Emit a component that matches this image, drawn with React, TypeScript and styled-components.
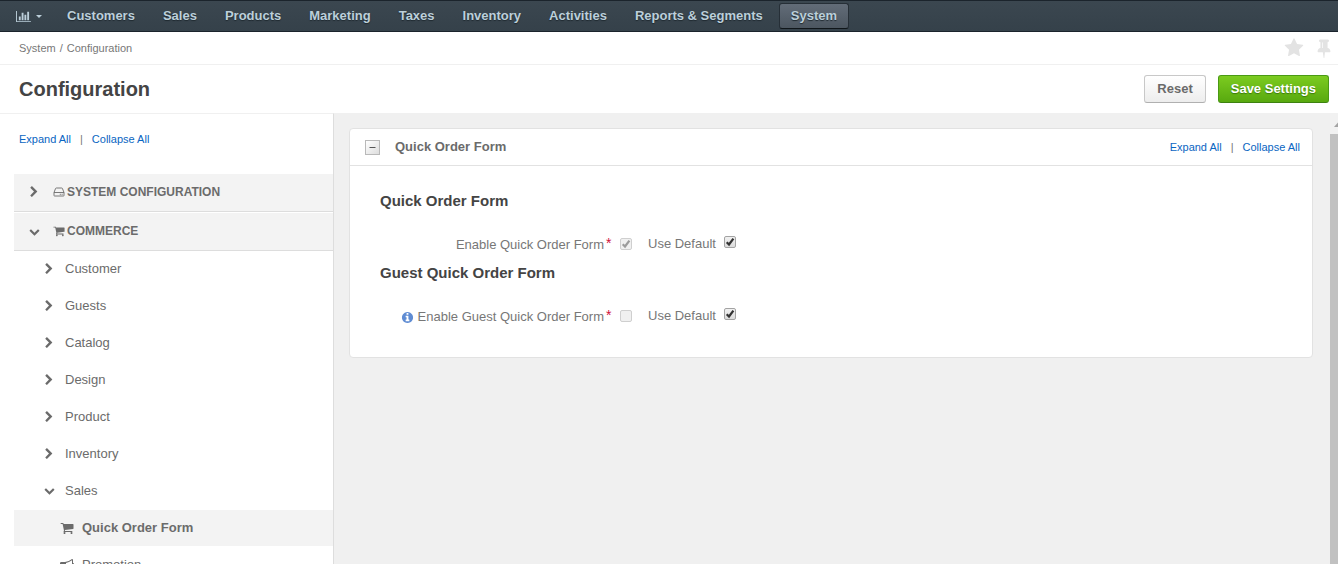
import React from "react";
import styled, { createGlobalStyle, css } from "styled-components";

const Global = createGlobalStyle`
  * { box-sizing: border-box; }
  body {
    margin: 0;
    background: #fff;
    color: #777;
    font-family: "Liberation Sans", Arial, sans-serif;
    font-size: 13px;
    line-height: 18px;
  }
  h1, h2, h3, ul, ol { margin: 0; padding: 0; }
  ul, ol { list-style: none; }
`;

/* ---------- icons ---------- */

const paths = {
  chart:
    "M640 896v512h-256v-512h256zm384-512v1024h-256v-1024h256zm1024 1152v128h-2048v-1536h128v1408h1920zm-640-896v768h-256v-768h256zm384-384v1152h-256v-1152h256z",
  right:
    "M1363 877l-742 742q-19 19-45 19t-45-19l-166-166q-19-19-19-45t19-45l531-531-531-531q-19-19-19-45t19-45l166-166q19-19 45-19t45 19l742 742q19 19 19 45t-19 45z",
  down:
    "M1683 808l-742 741q-19 19-45 19t-45-19l-742-741q-19-19-19-45.500t19-45.500l166-165q19-19 45-19t45 19l531 531 531-531q19-19 45-19t45 19l166 165q19 19 19 45.500t-19 45.500z",
  cart:
    "M704 1536q0 52-38 90t-90 38-90-38-38-90 38-90 90-38 90 38 38 90zm896 0q0 52-38 90t-90 38-90-38-38-90 38-90 90-38 90 38 38 90zm128-1088v512q0 24-16.500 42.500t-40.500 21.500l-1044 122q13 60 13 70 0 16-24 64h920q26 0 45 19t19 45-19 45-45 19h-1024q-26 0-45-19t-19-45q0-11 8-31.500t16-36 21.500-40 15.500-29.500l-177-823h-204q-26 0-45-19t-19-45 19-45 45-19h256q16 0 28.500 6.500t19.500 15.500 13 24.500 8 26 5.500 29.500 4.500 26h1201q26 0 45 19t19 45z",
  star:
    "M1728 647q0 22-26 48l-363 354 86 500q1 7 1 20 0 21-10.500 35.500t-30.500 14.500q-19 0-40-12l-449-236-449 236q-22 12-40 12-21 0-31.500-14.500t-10.500-35.500q0-6 2-20l86-500-364-354q-25-27-25-48 0-37 56-46l502-73 225-455q19-41 49-41t49 41l225 455 502 73q56 9 56 46z",
  pin:
    "M800 864v-448q0-14-9-23t-23-9-23 9-9 23v448q0 14 9 23t23 9 23-9 9-23zm672 352q0 26-19 45t-45 19h-429l-51 483q-2 12-10.500 20.500t-20.500 8.500h-1q-27 0-32-27l-76-485h-404q-26 0-45-19t-19-45q0-123 78.500-221.500t177.500-98.500v-512q-52 0-90-38t-38-90 38-90 90-38h640q52 0 90 38t38 90-38 90-90 38v512q99 0 177.500 98.500t78.500 221.500z",
  info:
    "M1152 1376v-160q0-14-9-23t-23-9h-96v-512q0-14-9-23t-23-9h-320q-14 0-23 9t-9 23v160q0 14 9 23t23 9h96v320h-96q-14 0-23 9t-9 23v160q0 14 9 23t23 9h448q14 0 23-9t9-23zm-128-896v-160q0-14-9-23t-23-9h-192q-14 0-23 9t-9 23v160q0 14 9 23t23 9h192q14 0 23-9t9-23zm640 416q0 209-103 385.500t-279.500 279.500-385.500 103-385.500-103-279.500-279.500-103-385.500 103-385.500 279.500-279.500 385.500-103 385.500 103 279.500 279.500 103 385.500z",
  bullhorn:
    "M1664 640q53 0 90.500 37.500t37.500 90.500-37.500 90.500-90.500 37.500v384q0 52-38 90t-90 38q-417-347-812-380-58 19-91 66t-31 100.500 40 92.500q-20 33-23 65.500t6 58 33.500 55 48 50 61.500 50.500q-29 58-111.500 83t-168.500 11.500-132-55.500q-7-23-29.500-87.500t-32-94.500-23-89-15-101 3.500-98.500 22-110.500h-122q-66 0-113-47t-47-113v-192q0-66 47-113t113-47h480q435 0 896-384 52 0 90 38t38 90v384zm-128 604v-954q-394 302-768 343v270q377 42 768 341z",
};

const Svg = styled.svg`
  display: block;
  flex: none;
  fill: currentColor;
`;

function Icon({ name, size }: { name: keyof typeof paths; size: number }) {
  const box = name === "chart" ? 2048 : 1792;
  return (
    <Svg
      width={name === "chart" ? size + 2 : size}
      height={size}
      viewBox={`0 0 ${box} 1792`}
      aria-hidden="true"
    >
      <path d={paths[name]} />
    </Svg>
  );
}

const ChevronSlot = styled.span`
  display: flex;
  align-items: center;
  justify-content: flex-end;
  width: 12px;
`;

function Chevron({ open }: { open?: boolean }) {
  return (
    <ChevronSlot>
      <Icon name={open ? "down" : "right"} size={open ? 11 : 12} />
    </ChevronSlot>
  );
}

function DriveIcon() {
  return (
    <Svg width="12" height="12" viewBox="0 0 12 12" aria-hidden="true">
      <path
        d="M1 6.5L2.6 2.4Q2.8 2 3.300 2H8.700Q9.200 2 9.400 2.400L11 6.500V9.500Q11 10 10.500 10H1.500Q1 10 1 9.500ZM1 6.500H11"
        fill="none"
        stroke="currentColor"
        strokeWidth="0.900"
      />
      <path d="M6.800 7.800h1v1h-1zM8.600 7.800h1v1h-1z" />
    </Svg>
  );
}

/* ---------- top navigation ---------- */

const TopNav = styled.nav`
  flex: none;
  display: flex;
  align-items: center;
  height: 32px;
  padding-left: 16px;
  border-top: 1px solid #1b242c;
  border-bottom: 1px solid #1b242c;
  background: linear-gradient(#3b4750, #35414a);
  color: #bccfda;
`;

const DashButton = styled.button`
  display: flex;
  align-items: center;
  gap: 5px;
  margin-right: 13px;
  padding: 0;
  border: 0;
  background: none;
  color: inherit;
`;

const NavList = styled.ul`
  display: flex;
  gap: 4px;
`;

const NavLink = styled.a<{ $active?: boolean }>`
  display: block;
  height: 26px;
  padding: 0 11px;
  border: 1px solid transparent;
  border-radius: 3px;
  color: #bccfda;
  font-weight: bold;
  line-height: 24px;
  text-decoration: none;
  text-shadow: 0 1px 1px #1f2930;
  ${(p) =>
    p.$active &&
    css`
      border-color: #262f37;
      border-bottom-color: #10161a;
      background: linear-gradient(#626c78, #4c5660);
    `}
`;

/* ---------- page head ---------- */

const CrumbBar = styled.div`
  flex: none;
  display: flex;
  align-items: center;
  justify-content: space-between;
  height: 33px;
  padding: 0 4px 0 19px;
  border-bottom: 1px solid #f0f0f0;
  font-size: 11px;
`;

const Crumbs = styled.ol`
  display: flex;
  gap: 4px;
`;

const Marks = styled.div`
  display: flex;
  gap: 10px;
`;

const MarkButton = styled.button`
  padding: 0;
  border: 0;
  background: none;
  color: #e3e3e3;
`;

const TitleBar = styled.header`
  flex: none;
  display: flex;
  align-items: center;
  justify-content: space-between;
  height: 48px;
  padding: 0 9px 0 19px;
`;

const PageTitle = styled.h1`
  color: #444;
  font-size: 20px;
  line-height: 28px;
`;

const Actions = styled.div`
  display: flex;
  gap: 12px;
`;

const Button = styled.button<{ $primary?: boolean }>`
  height: 28px;
  padding: 0 12px;
  border: 1px solid #c8c8c8;
  border-bottom-color: #b0b0b0;
  border-radius: 3px;
  background: linear-gradient(#fff, #ededed);
  color: #6a6a6a;
  font: bold 13px/26px "Liberation Sans", Arial, sans-serif;
  ${(p) =>
    p.$primary &&
    css`
      border-color: #4a9a14;
      border-bottom-color: #3d8210;
      background: linear-gradient(#7ccb20, #58a90f);
      color: #fff;
      text-shadow: 0 1px 1px #3a7a0a;
    `}
`;

/* ---------- sidebar ---------- */

const Body = styled.div`
  flex: 1;
  display: flex;
  min-height: 0;
`;

const Sidebar = styled.aside`
  flex: none;
  width: 334px;
  padding-left: 14px;
  overflow: hidden;
  border-top: 1px solid #f0f0f0;
  border-right: 1px solid #ddd;
`;

const LinkPair = styled.div<{ $side?: boolean }>`
  display: flex;
  gap: 9px;
  font-size: 11px;
  ${(p) => p.$side && css`padding: 16px 5px 26px;`}
`;

const TextLink = styled.a`
  color: #0a65c2;
  text-decoration: none;
`;

const GroupRow = styled.button`
  display: flex;
  align-items: center;
  width: 100%;
  height: 38px;
  padding: 0 0 1px 14px;
  border: 0;
  border-bottom: 1px solid #ddd;
  background: #f3f3f3;
  color: #6b6b6b;
  font: bold 12px/18px "Liberation Sans", Arial, sans-serif;
  & + & {
    margin-top: 1px;
  }
`;

const GroupIcon = styled.span`
  margin: 0 2px 0 13px;
`;

const ItemRow = styled.a<{ $leaf?: boolean; $active?: boolean }>`
  display: flex;
  align-items: center;
  gap: ${(p) => (p.$leaf ? "8px" : "10px")};
  height: 36px;
  margin-bottom: 1px;
  padding-left: ${(p) => (p.$leaf ? "46px" : "29px")};
  padding-bottom: 1px;
  background: ${(p) => (p.$active ? "#f3f3f3" : "transparent")};
  color: #6b6b6b;
  font-weight: ${(p) => (p.$active ? "bold" : "normal")};
  text-decoration: none;
`;

/* ---------- settings panel ---------- */

const Main = styled.main`
  flex: 1;
  min-width: 0;
  padding: 15px 17px 15px 15px;
  background: #f0f0f0;
`;

const Panel = styled.section`
  border: 1px solid #e2e2e2;
  border-radius: 4px;
  background: #fff;
`;

const PanelHead = styled.div`
  display: flex;
  align-items: center;
  height: 37px;
  padding: 0 12px 0 15px;
  border-bottom: 1px solid #e2e2e2;
`;

const PanelTitle = styled.h2`
  flex: 1;
  margin-left: 15px;
  color: #6b6b6b;
  font-size: 13px;
  line-height: 18px;
`;

const Toggle = styled.button`
  display: grid;
  place-items: center;
  width: 15px;
  height: 15px;
  padding: 0;
  border: 1px solid #b9b9b9;
  background: linear-gradient(135deg, #fff, #ddd);
  color: #555;
`;

const PanelBody = styled.div`
  padding: 23px 30px 24px;
`;

const SectionTitle = styled.h3`
  color: #444;
  font-size: 15px;
  line-height: 24px;
`;

const Field = styled.div`
  display: flex;
  align-items: center;
  height: 48px;
  padding-top: 14px;
`;

const FieldLabel = styled.label`
  display: flex;
  align-items: center;
  justify-content: flex-end;
  width: 232px;
  margin-right: 8px;
  padding-top: 2px;
`;

const InfoMark = styled.span`
  margin-right: 4px;
  color: #5f8cd3;
`;

const Required = styled.span`
  align-self: flex-start;
  width: 8px;
  padding-left: 2px;
  color: #d0103a;
  font-size: 14px;
  line-height: 14px;
`;

const DefaultLabel = styled.label`
  display: flex;
  align-items: flex-start;
  gap: 8px;
  margin-left: 16px;
`;

const CheckWrap = styled.span`
  position: relative;
  display: block;
  width: 12px;
  height: 12px;
`;

const DefaultCheck = styled.span`
  padding-top: 1px;
`;

const CheckInput = styled.input`
  display: block;
  appearance: none;
  width: 12px;
  height: 12px;
  margin: 0;
  border: 1px solid #a3a3a3;
  border-radius: 2px;
  background: linear-gradient(#f1f1f1, #dcdcdc);
  &:disabled {
    border-color: #cfcfcf;
    background: #f0f0f0;
  }
`;

const Tick = styled.svg<{ $dim?: boolean }>`
  position: absolute;
  top: 0;
  left: 0;
  fill: none;
  stroke: ${(p) => (p.$dim ? "#9c9c9c" : "#333")};
  stroke-width: 2.2;
  pointer-events: none;
`;

function Check(props: { id: string; on?: boolean; disabled?: boolean }) {
  const [on, setOn] = React.useState(!!props.on);
  return (
    <CheckWrap>
      <CheckInput
        type="checkbox"
        id={props.id}
        checked={on}
        disabled={props.disabled}
        onChange={() => setOn(!on)}
      />
      {on && (
        <Tick $dim={props.disabled} width="12" height="12" viewBox="0 0 12 12" aria-hidden="true">
          <path d="M2.700 6.300L5 8.500L9.400 2.600" />
        </Tick>
      )}
    </CheckWrap>
  );
}

/* ---------- scroll track at the right edge ---------- */

const Track = styled.div`
  flex: none;
  display: flex;
  flex-direction: column;
  width: 8px;
  overflow: hidden;
  background: #f1f1f1;
`;

const TrackArrow = styled.svg`
  display: block;
  flex: none;
  fill: #a3a3a3;
`;

const Thumb = styled.div`
  flex: 1;
  background: #c1c1c1;
`;

const Shell = styled.div`
  display: flex;
  flex-direction: column;
  height: 100vh;
`;

const navItems = [
  "Customers", "Sales", "Products", "Marketing", "Taxes",
  "Inventory", "Activities", "Reports & Segments", "System",
];
const commerce = ["Customer", "Guests", "Catalog", "Design", "Product", "Inventory"];

function ExpandLinks({ side }: { side?: boolean }) {
  return (
    <LinkPair $side={side}>
      <TextLink href="#expand">Expand All</TextLink>
      <span>|</span>
      <TextLink href="#collapse">Collapse All</TextLink>
    </LinkPair>
  );
}

function SettingField(props: { id: string; label: string; on?: boolean; info?: boolean }) {
  return (
    <Field>
      <FieldLabel htmlFor={props.id}>
        {props.info && (
          <InfoMark>
            <Icon name="info" size={13} />
          </InfoMark>
        )}
        {props.label}
        <Required>*</Required>
      </FieldLabel>
      <Check id={props.id} on={props.on} disabled />
      <DefaultLabel htmlFor={`${props.id}-default`}>
        Use Default
        <DefaultCheck>
          <Check id={`${props.id}-default`} on />
        </DefaultCheck>
      </DefaultLabel>
    </Field>
  );
}

export default function App() {
  return (
    <Shell>
      <Global />
      <TopNav>
        <DashButton aria-label="Dashboards">
          <Icon name="chart" size={13} />
          <Svg width="6" height="3" viewBox="0 0 6 3" aria-hidden="true">
            <path d="M0 0h6L3 3z" />
          </Svg>
        </DashButton>
        <NavList>
          {navItems.map((t) => (
            <li key={t}>
              <NavLink href="#nav" $active={t === "System"}>{t}</NavLink>
            </li>
          ))}
        </NavList>
      </TopNav>
      <CrumbBar>
        <Crumbs>
          <li>System</li>
          <li>/</li>
          <li>Configuration</li>
        </Crumbs>
        <Marks>
          <MarkButton aria-label="Add to favorites"><Icon name="star" size={20} /></MarkButton>
          <MarkButton aria-label="Pin page"><Icon name="pin" size={20} /></MarkButton>
        </Marks>
      </CrumbBar>
      <TitleBar>
        <PageTitle>Configuration</PageTitle>
        <Actions>
          <Button type="button">Reset</Button>
          <Button type="button" $primary>Save Settings</Button>
        </Actions>
      </TitleBar>
      <Body>
        <Sidebar>
          <ExpandLinks side />
          <GroupRow>
            <Chevron />
            <GroupIcon><DriveIcon /></GroupIcon>
            SYSTEM CONFIGURATION
          </GroupRow>
          <GroupRow>
            <Chevron open />
            <GroupIcon><Icon name="cart" size={12} /></GroupIcon>
            COMMERCE
          </GroupRow>
          {commerce.map((t) => (
            <ItemRow key={t} href="#item">
              <Chevron />
              {t}
            </ItemRow>
          ))}
          <ItemRow href="#item">
            <Chevron open />
            Sales
          </ItemRow>
          <ItemRow href="#item" $leaf $active>
            <Icon name="cart" size={14} />
            Quick Order Form
          </ItemRow>
          <ItemRow href="#item" $leaf>
            <Icon name="bullhorn" size={14} />
            Promotion
          </ItemRow>
        </Sidebar>
        <Main>
          <Panel>
            <PanelHead>
              <Toggle aria-label="Collapse section">
                <Svg width="7" height="7" viewBox="0 0 7 7" aria-hidden="true">
                  <path d="M0.500 3h6v1h-6z" />
                </Svg>
              </Toggle>
              <PanelTitle>Quick Order Form</PanelTitle>
              <ExpandLinks />
            </PanelHead>
            <PanelBody>
              <SectionTitle>Quick Order Form</SectionTitle>
              <SettingField id="quick-order" label="Enable Quick Order Form" on />
              <SectionTitle>Guest Quick Order Form</SectionTitle>
              <SettingField id="guest-order" label="Enable Guest Quick Order Form" info />
            </PanelBody>
          </Panel>
        </Main>
        <Track aria-hidden="true">
          <TrackArrow width="17" height="21" viewBox="0 0 17 21">
            <path d="M4 14L8.500 9L13 14z" />
          </TrackArrow>
          <Thumb />
        </Track>
      </Body>
    </Shell>
  );
}
